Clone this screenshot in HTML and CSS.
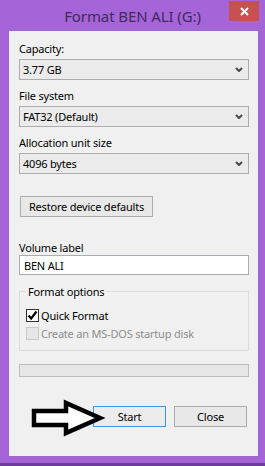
FILE: index.html
```html
<!DOCTYPE html>
<html>
<head>
<meta charset="utf-8">
<link rel="stylesheet" href="styles.css">
</head>
<body>
<div class="window">
  <div class="titlebar">
    <span></span>
    <div class="title">Format BEN ALI (G:)</div>
    <div class="close-wrap">
      <div class="close">
        <svg width="9" height="9" viewBox="0 0 9 9"><path d="M1 1 L8 8 M8 1 L1 8" stroke="#fff" stroke-width="2" fill="none"/></svg>
      </div>
    </div>
  </div>
  <div class="panel">
    <div class="lbl">Capacity:</div>
    <div class="select"><span>3.77 GB</span><svg class="chev" width="8" height="5" viewBox="0 0 8 5"><path d="M1 1 L4 4 L7 1" stroke="#4a4a4a" stroke-width="2" fill="none"/></svg></div>
    <div class="lbl">File system</div>
    <div class="select"><span>FAT32 (Default)</span><svg class="chev" width="8" height="5" viewBox="0 0 8 5"><path d="M1 1 L4 4 L7 1" stroke="#4a4a4a" stroke-width="2" fill="none"/></svg></div>
    <div class="lbl">Allocation unit size</div>
    <div class="select"><span>4096 bytes</span><svg class="chev" width="8" height="5" viewBox="0 0 8 5"><path d="M1 1 L4 4 L7 1" stroke="#4a4a4a" stroke-width="2" fill="none"/></svg></div>
    <div class="restore-row"><div class="btn restore">Restore device defaults</div></div>
    <div class="lbl vol">Volume label</div>
    <div class="input">BEN ALI</div>
    <fieldset class="group">
      <legend>Format options</legend>
      <div class="check"><span class="box"><svg width="11" height="11" viewBox="0 0 11 11"><path d="M1.5 5.5 L4.2 8.5 L9.5 1.5" stroke="#000" stroke-width="2.2" fill="none"/></svg></span>Quick Format</div>
      <div class="check disabled"><span class="box"></span>Create an MS-DOS startup disk</div>
    </fieldset>
    <div class="progress"></div>
    <div class="actions">
      <div class="btn action start">Start</div>
      <div class="btn action">Close</div>
    </div>
  </div>
  <div class="bottom-strip"></div>
  <svg class="arrow" width="80" height="40" viewBox="0 0 80 40">
    <polygon points="6,13 38,13 38,5 72,20 38,35 38,27 6,27" fill="#fff" stroke="#000" stroke-width="4.5" stroke-linejoin="miter"/>
  </svg>
</div>
</body>
</html>
```

FILE: styles.css
```css
* { box-sizing: border-box; }
html, body { margin: 0; padding: 0; }
body {
  width: 265px;
  height: 466px;
  overflow: hidden;
  font-family: "Noto Sans", sans-serif;
  font-size: 11px;
  letter-spacing: -0.2px;
  color: #000;
}
.window {
  position: relative;
  width: 265px;
  height: 466px;
  background: #a664d9;
  display: flex;
  flex-direction: column;
}
.titlebar {
  height: 30px;
  display: grid;
  grid-template-columns: 1fr auto 1fr;
  align-items: start;
}
.title {
  font-size: 15px;
  line-height: 30px;
  color: #3d2c5c;
  white-space: nowrap;
  letter-spacing: -0.1px;
  padding-top: 1px;
}
.close-wrap {
  display: flex;
  justify-content: flex-end;
  padding-right: 6px;
  padding-top: 1px;
}
.close {
  width: 30px;
  height: 20px;
  background: #c75050;
  display: flex;
  align-items: center;
  justify-content: center;
}
.panel {
  margin: 0 6px 0 8px;
  height: 427px;
  background: #f0f0f0;
  border: 1px solid #9a68c6;
  padding: 10px 9px 0 10px;
  display: flex;
  flex-direction: column;
}
.lbl {
  line-height: 15px;
  margin-bottom: 3px;
}
.select {
  height: 21px;
  border: 1px solid #acacac;
  background: #ebebeb;
  display: flex;
  align-items: center;
  justify-content: space-between;
  padding: 0 5px 0 3px;
  margin-bottom: 8px;
}
.select span { line-height: 15px; }
.restore-row {
  margin-top: 14px;
  padding-left: 1px;
}
.btn {
  height: 21px;
  border: 1px solid #acacac;
  background: #e8e8e8;
  display: flex;
  align-items: center;
  justify-content: center;
  line-height: 15px;
}
.restore { width: 133px; }
.vol { margin-top: 23px; margin-bottom: 0; }
.input {
  height: 20px;
  border: 1px solid #abadb3;
  background: #fff;
  padding: 0 4px;
  display: flex;
  align-items: center;
  line-height: 15px;
}
.group {
  margin: 9px 0 0 0;
  padding: 7px 6px 8px 6px;
  border: 1px solid #dcdcdc;
  min-width: 0;
}
.group legend {
  padding: 0 2px;
  margin-left: 0;
  line-height: 15px;
}
.check {
  height: 18px;
  display: flex;
  align-items: center;
  line-height: 15px;
}
.box {
  width: 13px;
  height: 13px;
  border: 1px solid #333;
  background: #fff;
  margin-right: 2px;
  display: flex;
  align-items: center;
  justify-content: center;
}
.check.disabled { color: #8d8d8d; }
.check.disabled .box {
  border-color: #c8c8c8;
  background: #e6e6e6;
}
.progress {
  margin-top: 13px;
  height: 13px;
  border: 1px solid #bcbcbc;
  background: #e6e6e6;
}
.actions {
  margin-top: 29px;
  display: flex;
  justify-content: flex-end;
  gap: 8px;
  padding-right: 2px;
}
.action { width: 73px; }
.start {
  border-color: #3399ff;
  background: #ececec;
}
.bottom-strip {
  margin-top: auto;
  height: 3px;
  background: #6d3b98;
}
.arrow {
  position: absolute;
  left: 28px;
  top: 398px;
}
```
